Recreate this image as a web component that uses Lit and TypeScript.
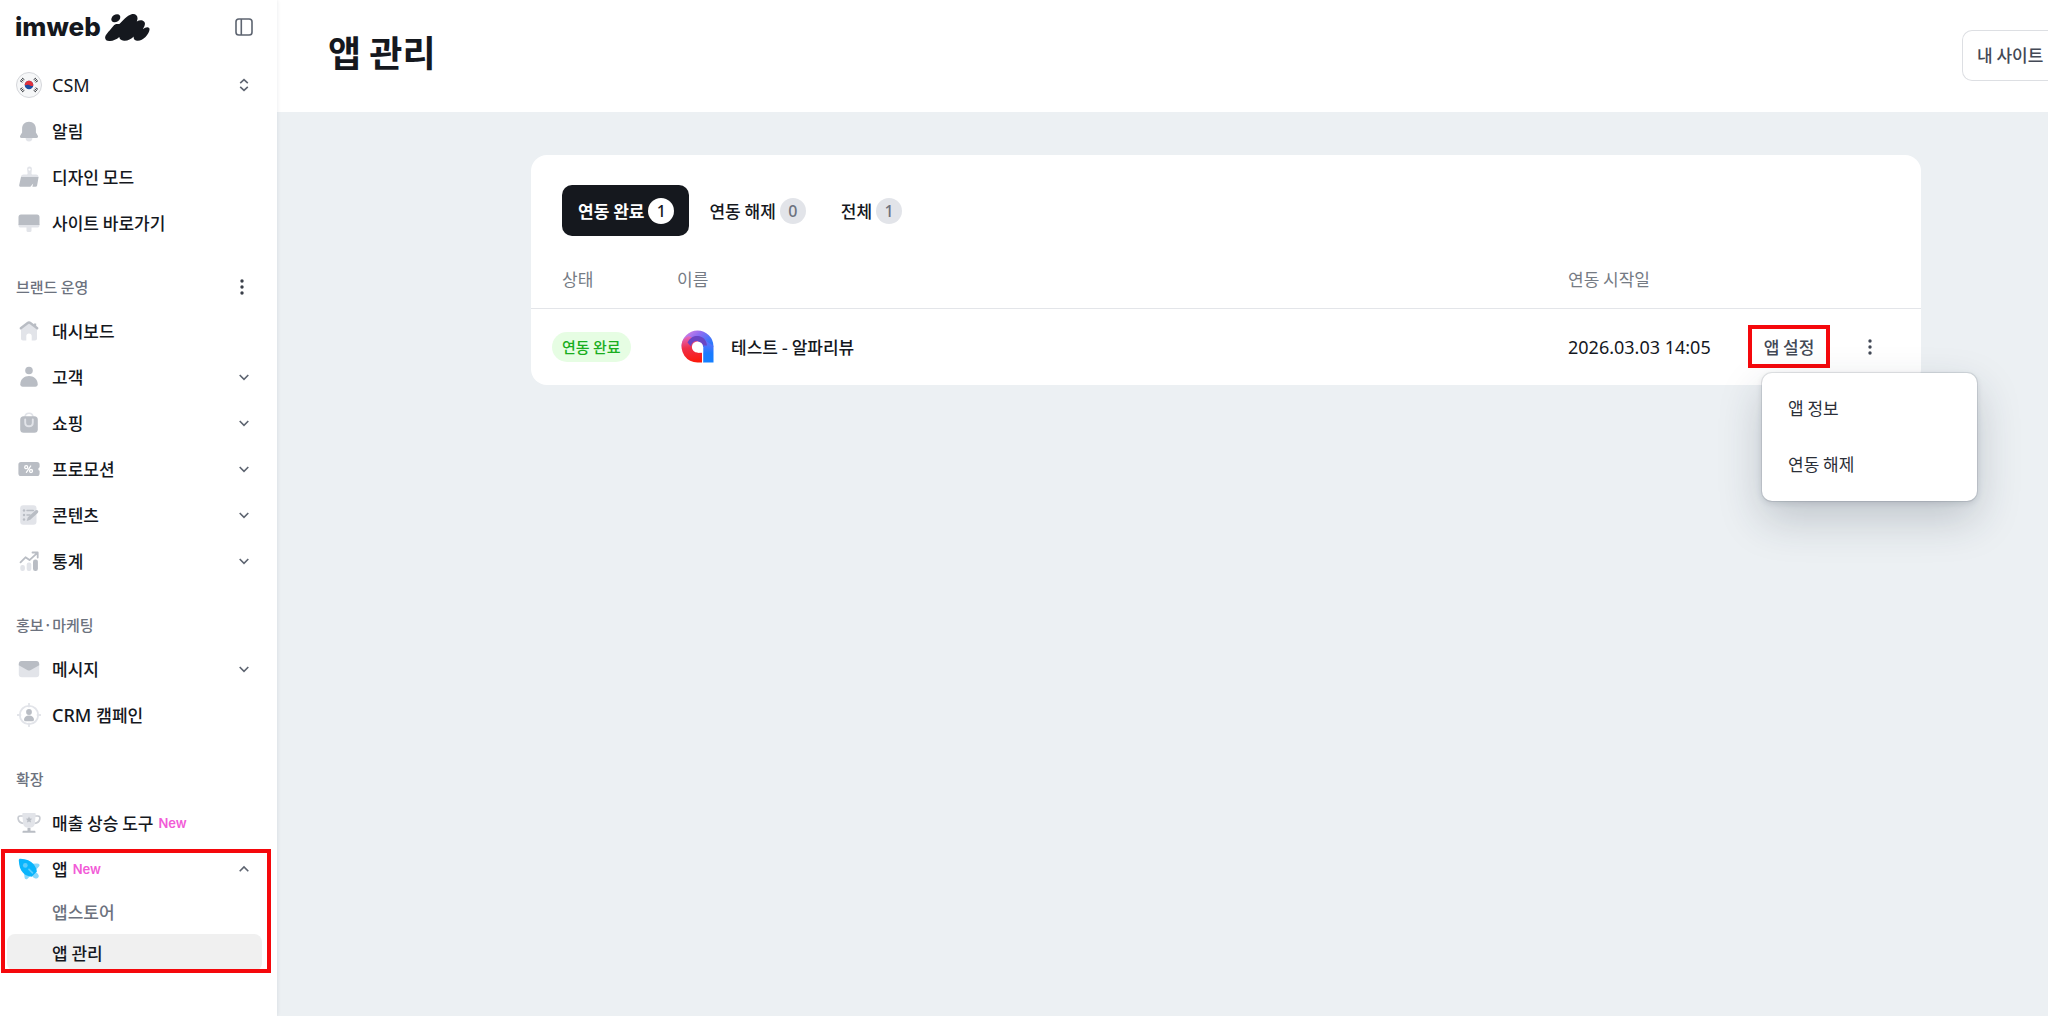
import { LitElement, html, svg, css, nothing } from "lit";
import { customElement, property, state } from "lit/decorators.js";
import { classMap } from "lit/directives/class-map.js";

const DARK = "#b9bdc4";
const LIGHT = "#e2e4e9";

const ICONS: Record<string, unknown> = {
  bell: svg`<circle cx="12" cy="19" r="3.4" fill=${LIGHT}/>
    <path fill=${DARK} d="M12 2.8c-4.3 0-6.9 3-6.9 7v3.700L3.300 16.600c-.8 1.200-.1 2.400 1.200 2.400h15c1.300 0 2-1.200 1.200-2.400l-1.800-3.100V9.800c0-4-2.600-7-6.900-7z"/>`,
  brush: svg`<path fill=${LIGHT} fill-rule="evenodd" d="M12.500 1.500c-1.700 0-2.600 1.200-2.400 2.800l.5 3.700c.1 1-.4 1.500-1.300 1.500H6.500C5 9.500 4 10.500 3.900 12h17.600c0-1.500-.9-2.500-2.400-2.500h-3.300c-.9 0-1.400-.5-1.300-1.500l.4-3.700c.2-1.600-.7-2.800-2.400-2.800zm0 2a1.100 1.100 0 1 1 0 2.200 1.100 1.100 0 0 1 0-2.200z"/>
    <path fill=${DARK} d="M4 12h17.600l-1.500 8.600c-.1.800-.7 1.200-1.500 1.200h-3.200l.8-3.300-2.800 3.300H3.800c-1.200 0-1.800-.8-1.600-1.900z"/>`,
  monitor: svg`<path fill=${LIGHT} d="M1.500 13h21v1.200c0 1.500-.9 2.300-2.300 2.300h-5.700v3.300c0 .7-.5 1.200-1.200 1.200h-2.600c-.7 0-1.200-.5-1.200-1.200v-3.300H3.800c-1.400 0-2.300-.8-2.300-2.300z"/>
    <path fill=${DARK} d="M4 3.500h16c1.600 0 2.500.9 2.500 2.500v8h-21V6c0-1.600.9-2.500 2.500-2.500z"/>`,
  home: svg`<path fill=${LIGHT} d="M4 10l8-6 8 6v9.500c0 1.300-.8 2-2 2h-3.300V17c0-1.600-1-2.500-2.700-2.500S9.300 15.400 9.300 17v4.500H6c-1.200 0-2-.7-2-2z"/>
    <path fill="none" stroke=${DARK} stroke-width="2.400" stroke-linecap="round" stroke-linejoin="round" d="M3.800 9.200L10.700 4q1.300-1 2.600 0l6.900 5.200"/>
    <path fill=${DARK} d="M17 4.500h2.200v4L17 7z"/>`,
  person: svg`<circle cx="12" cy="5.500" r="3.800" fill=${DARK}/>
    <path fill=${DARK} d="M12 11c-4.800 0-8.700 3.300-8.700 8.200 0 1.600.9 2.500 2.400 2.500h12.600c1.500 0 2.400-.9 2.400-2.500C20.700 14.300 16.800 11 12 11z"/>`,
  bag: svg`<path fill="none" stroke=${LIGHT} stroke-width="1.600" d="M8 6.500c0-2.900 1.500-4.300 4-4.300s4 1.400 4 4.300"/>
    <rect x="3.200" y="5.300" width="17.600" height="16.500" rx="3.500" fill=${DARK}/>
    <path fill="none" stroke=${LIGHT} stroke-width="1.900" stroke-linecap="round" d="M8.200 8.500v3c0 2.400 1.500 3.800 3.800 3.800s3.800-1.400 3.800-3.800v-3"/>`,
  coupon: svg`<path fill=${DARK} d="M4 5h16c1.700 0 2.600.9 2.600 2.600v2.600c-1.700.4-1.700 3.200 0 3.600v2.600c0 1.700-.9 2.600-2.600 2.600H4c-1.700 0-2.600-.9-2.600-2.600V7.600C1.400 5.900 2.300 5 4 5z"/>
    <g fill="none" stroke="#fff" stroke-width="1.300" stroke-linecap="round"><circle cx="9.200" cy="10.200" r="1.500"/><circle cx="14" cy="14" r="1.500"/><path d="M13.700 9l-4.300 6.300"/></g>`,
  note: svg`<rect x="3.200" y="2.300" width="16.300" height="19.400" rx="3" fill=${LIGHT}/>
    <g fill=${DARK}><circle cx="7" cy="7.500" r="1.200"/><circle cx="7" cy="12" r="1.200"/><circle cx="7" cy="16.500" r="1.200"/></g>
    <path stroke=${DARK} stroke-width="1.500" stroke-linecap="round" d="M10 7.500h6.300M10 12h3"/>
    <path fill=${DARK} d="M18.300 7.500c.8-.8 2-.8 2.600 0 .6.700.5 1.700-.2 2.400l-7.400 6.900-3.600 1.100 1-3.500z"/>`,
  chart: svg`<rect x="3.300" y="16" width="4.600" height="6" rx="2" fill=${LIGHT}/><rect x="9.700" y="13.500" width="4.600" height="8.500" rx="2" fill=${LIGHT}/>
    <rect x="16" y="10.500" width="4.900" height="11.500" rx="2.200" fill=${DARK}/>
    <path fill="none" stroke=${DARK} stroke-width="1.800" stroke-linecap="round" stroke-linejoin="round" d="M3.500 13.300l5-5 4 2.800 7.600-7M15.500 3.500h5.200v5"/>`,
  mail: svg`<rect x="1.800" y="4" width="20.400" height="16.300" rx="3" fill=${LIGHT}/>
    <path fill=${DARK} d="M4.800 4h14.400c1.700 0 3 1.300 3 3v1.300l-8.400 4.600c-1.200.7-2.400.7-3.600 0L1.800 8.300V7c0-1.700 1.300-3 3-3z"/>`,
  target: svg`<circle cx="12" cy="12" r="9.200" fill="#fff" stroke=${LIGHT} stroke-width="1.800"/>
    <path stroke=${LIGHT} stroke-width="1.800" stroke-linecap="round" d="M12 .7v2.800M12 20.500v2.800M.7 12h2.800M20.500 12h2.800"/>
    <circle cx="12" cy="9" r="2.900" fill=${DARK}/><path fill=${DARK} d="M12 12.600c-3 0-5 1.900-5 4.200 0 .9.500 1.400 1.400 1.400h7.200c.9 0 1.400-.5 1.400-1.400 0-2.300-2-4.200-5-4.200z"/>`,
  trophy: svg`<path fill="none" stroke="#c9ccd2" stroke-width="1.700" d="M6 5H3.200C1.300 5 .9 6.300 1.200 8c.4 2.400 2.200 4 5.300 4.500M18 5h2.800c1.900 0 2.300 1.300 2 3-.4 2.400-2.200 4-5.300 4.500"/>
    <path fill=${LIGHT} d="M6.500 2h11c.8 0 1.300.5 1.200 1.300l-.8 9c-.2 2.800-2.400 4.700-5.900 4.700s-5.700-1.900-5.900-4.700l-.8-9C5.200 2.500 5.700 2 6.500 2z"/>
    <path fill=${DARK} d="M12 5.500l.95 2.100 2.250.25-1.700 1.500.5 2.250L12 10.450 10 11.600l.5-2.250-1.700-1.500 2.250-.25zM10.500 17h3v2.800h3.800c.7 0 1.200.5 1.200 1.200v.8h-13V21c0-.7.500-1.200 1.200-1.200h3.800z"/>`,
  rocket: svg`<path fill="#86d7fb" d="M14.500 6.800l5.500-.3c2.500 0 3.300 1.500 2 3l-3.800 4.300zM7 14.500l.5 5.500c.2 2.400 1.800 2.900 3.300 1.400l3.700-3.900z"/>
    <path fill="#86d7fb" d="M14.500 17.500l3-3c2.200.8 4.500 3.200 4.300 4.700-.3 1.800-2 2.600-3.500 2.300-1.500-.3-3.200-1.700-3.800-4z"/>
    <path fill="#0ab5fc" d="M1.800 3.400c-.1-1 .6-1.700 1.600-1.600 6.100.3 10.400 2.100 13.200 5.400 1.800 2.100 2.900 4.500 3.300 7.300l-5.200 5.300c-3.500-.3-6.500-1.500-8.700-4C3.400 12.900 2 8.800 1.800 3.400z"/>
    <circle cx="8.300" cy="8.400" r="2.400" fill="#5ccdfc"/><path stroke="#5ccdfc" stroke-width="1.700" stroke-linecap="round" d="M12 12.300l3.500 3.500"/>`,
};

const flag = svg`<circle cx="13" cy="13" r="12.500" fill="#f6f7f8" stroke="#d4d6da"/>
  <circle cx="13" cy="13" r="4.300" fill="#1d4da1"/>
  <path fill="#e0323c" d="M8.700 13a4.300 4.300 0 0 1 8.600 0c0 .9-.8 1.300-2.100 1-1.200-.3-1.800-1.100-3-1.300-1.600-.3-2.300 1.100-3.500.3z"/>
  <g fill="none" stroke="#33363b" stroke-width="1">
    <path d="M4 8.600l2.400 1.700M5 7.300l2.400 1.700M6 6l2.400 1.700M22 8.600l-2.400 1.700M21 7.300l-2.400 1.700M20 6l-2.400 1.700M4 17.400l2.400-1.700M5 18.700l2.400-1.700M6 20l2.400-1.700M22 17.400l-2.400-1.700M21 18.700l-2.400-1.700M20 20l-2.400-1.700"/></g>`;

const kebab = html`<svg class="kebab" viewBox="0 0 20 20" width="20" height="20" aria-hidden="true" fill="currentColor">
  <circle cx="10" cy="4" r="1.700"/><circle cx="10" cy="10" r="1.700"/><circle cx="10" cy="16" r="1.700"/></svg>`;

interface Item {
  label: string;
  latin?: string;
  icon: string;
  fold?: "open" | "closed";
  isNew?: boolean;
  children?: { label: string; active?: boolean }[];
}
interface Group {
  title?: string;
  menu?: boolean;
  items: Item[];
}

const GROUPS: Group[] = [
  {
    items: [
      { label: "알림", icon: "bell" },
      { label: "디자인 모드", icon: "brush" },
      { label: "사이트 바로가기", icon: "monitor" },
    ],
  },
  {
    title: "브랜드 운영",
    menu: true,
    items: [
      { label: "대시보드", icon: "home" },
      { label: "고객", icon: "person", fold: "closed" },
      { label: "쇼핑", icon: "bag", fold: "closed" },
      { label: "프로모션", icon: "coupon", fold: "closed" },
      { label: "콘텐츠", icon: "note", fold: "closed" },
      { label: "통계", icon: "chart", fold: "closed" },
    ],
  },
  {
    title: "홍보·마케팅",
    items: [
      { label: "메시지", icon: "mail", fold: "closed" },
      { latin: "CRM", label: "캠페인", icon: "target" },
    ],
  },
  {
    title: "확장",
    items: [
      { label: "매출 상승 도구", icon: "trophy", isNew: true },
      {
        label: "앱",
        icon: "rocket",
        isNew: true,
        fold: "open",
        children: [{ label: "앱스토어" }, { label: "앱 관리", active: true }],
      },
    ],
  },
];

const shared = css`
  * { box-sizing: border-box; }
  button, a {
    font: inherit;
    color: inherit;
    background: none;
    border: 0;
    padding: 0;
    margin: 0;
    text-decoration: none;
    text-align: left;
    cursor: pointer;
    white-space: nowrap;
  }
  svg { display: block; flex: none; }
  .latin { font-family: "Noto Sans", sans-serif; font-size: 18px; }
`;

@customElement("side-bar")
export class SideBar extends LitElement {
  static styles = [
    shared,
    css`
      :host {
        display: block;
        flex: none;
        width: 277px;
        background: #fff;
        color: #15181e;
        box-shadow: 0 0 4px rgba(20, 30, 50, 0.1);
        z-index: 1;
      }
      .top {
        display: flex;
        align-items: center;
        justify-content: space-between;
        height: 54px;
        padding: 0 22px 0 15px;
      }
      .brand { display: flex; align-items: center; gap: 3px; }
      .brand-name { font: 800 26px/32px Inter, sans-serif; }
      .toggle { color: #5d6470; }
      .row {
        display: flex;
        align-items: center;
        gap: 10px;
        width: 100%;
        height: 46px;
        padding: 0 22px 0 16px;
        font-weight: 500;
      }
      .site { margin-top: 8px; font-weight: 400; }
      .icon { width: 26px; display: flex; justify-content: center; flex: none; }
      .label { display: flex; align-items: center; gap: 5px; flex: 1; }
      .new { font: 600 13px/20px Inter, sans-serif; color: #f25bd7; }
      .arrow { color: #5d6470; margin-right: 1px; }
      .head {
        display: flex;
        align-items: center;
        justify-content: space-between;
        height: 42px;
        margin-top: 20px;
        padding: 0 25px 0 16px;
        font-size: 15px;
        font-weight: 500;
        color: #6c727e;
      }
      .head .kebab { color: #3a3f49; }
      .list { list-style: none; margin: 0; padding: 0; }
      .sub { display: flex; flex-direction: column; gap: 4px; padding: 1px 15px 0 7px; }
      .sub-link {
        display: flex;
        align-items: center;
        height: 37px;
        padding-left: 45px;
        border-radius: 8px;
        font-weight: 500;
        color: #6c727e;
      }
      .sub-link.active { background: #f0f0f0; color: #15181e; }
      .fold { position: relative; }
      .mark {
        position: absolute;
        top: 3px;
        bottom: -2px;
        left: 1px;
        right: 6px;
        border: 4px solid #f5080c;
        pointer-events: none;
      }
    `,
  ];

  private arrow(open: boolean) {
    return html`<svg class="arrow" width="20" height="20" viewBox="0 0 20 20" fill="none" stroke="currentColor" stroke-width="1.600" aria-hidden="true">
      <path d=${open ? "M5.700 12.200L10 7.900l4.300 4.300" : "M5.700 8l4.300 4.300L14.300 8"}></path></svg>`;
  }

  private item(i: Item) {
    const body = html`<span class="icon"><svg width="24" height="24" viewBox="0 0 24 24" aria-hidden="true">${ICONS[i.icon]}</svg></span>
      <span class="label">${i.latin ? html`<span class="latin">${i.latin}</span>` : nothing}<span>${i.label}</span>${i.isNew
        ? html`<span class="new">New</span>`
        : nothing}</span>
      ${i.fold ? this.arrow(i.fold === "open") : nothing}`;
    const row = i.fold
      ? html`<button class="row" type="button" aria-expanded=${i.fold === "open"}>${body}</button>`
      : html`<a class="row" href="#">${body}</a>`;
    return html`<li class=${classMap({ fold: !!i.children })}>
      ${row}
      ${i.children
        ? html`<div class="sub">
              ${i.children.map(
                (c) => html`<a class=${classMap({ "sub-link": true, active: !!c.active })} href="#">${c.label}</a>`
              )}
            </div>
            <div class="mark"></div>`
        : nothing}
    </li>`;
  }

  render() {
    return html`
      <div class="top">
        <a class="brand" href="#" aria-label="imweb">
          <span class="brand-name">imweb</span>
          <svg width="46" height="30" viewBox="0 0 46 30" aria-hidden="true" fill="#15181e">
            <ellipse cx="11.800" cy="6.300" rx="4.900" ry="3.600" transform="rotate(-35 11.800 6.300)"/>
            <path d="M6 29C2.500 29.300.5 27.300 1.300 24.500 2 22 6 18.500 10 13.300 11 12 13 11.700 15.300 12 19 8.500 23 3.500 27.500 2.200 32 1 35 4.500 32.800 9.500 35 8.200 38 7.700 40 9.500 42 11.500 40.500 14.500 38.800 17.200 41 15.500 44 14.500 45.300 16.200 46.300 18 44.300 22 41.500 25 38.500 28 35 29.500 32 28.500 29.800 27.700 29.300 26 29.800 24.500 27 27.300 23.500 29 20 28.700 17 28.400 15.500 27 15.300 25 12.500 27.500 9.300 28.800 6 29z"/>
          </svg>
        </a>
        <button class="toggle" type="button" aria-label="메뉴 접기">
          <svg width="22" height="22" viewBox="0 0 22 22" fill="none" stroke="currentColor" stroke-width="1.600"><rect x="3" y="3" width="16" height="16" rx="2.800"/><path d="M8.300 3v16"/></svg>
        </button>
      </div>
      <button class="row site" type="button">
        <span class="icon"><svg width="26" height="26" viewBox="0 0 26 26" aria-hidden="true">${flag}</svg></span>
        <span class="label"><span class="latin">CSM</span></span>
        <svg class="arrow" width="20" height="20" viewBox="0 0 20 20" fill="none" stroke="currentColor" stroke-width="1.600" aria-hidden="true"><path d="M6.200 8.200L10 4.700l3.800 3.500M6.200 11.800l3.800 3.500 3.800-3.500"/></svg>
      </button>
      <nav>
        ${GROUPS.map(
          (g) => html`
            ${g.title
              ? html`<div class="head"><span>${g.title}</span>${g.menu
                    ? html`<button type="button" aria-label="더보기">${kebab}</button>`
                    : nothing}</div>`
              : nothing}
            <ul class="list">${g.items.map((i) => this.item(i))}</ul>
          `
        )}
      </nav>
    `;
  }
}

@customElement("app-list")
export class AppList extends LitElement {
  @state() private tab = 0;

  static styles = [
    shared,
    css`
      :host {
        display: block;
        background: #fff;
        border-radius: 16px;
        color: #15181e;
      }
      .tabs { display: flex; gap: 4px; padding: 30px 31px 0; }
      .tab {
        display: flex;
        align-items: center;
        gap: 4px;
        height: 51px;
        padding: 0 15px 0 16px;
        border-radius: 10px;
        font-weight: 500;
      }
      .tab.on { background: #15181e; color: #fff; font-weight: 700; }
      .count {
        width: 26px;
        height: 26px;
        border-radius: 13px;
        background: #e2e4e9;
        color: #6c727e;
        font-family: "Noto Sans", sans-serif;
        font-weight: 500;
        font-size: 16px;
        line-height: 26px;
        text-align: center;
      }
      .tab.on .count { background: #fff; color: #15181e; }
      .table { width: 100%; table-layout: fixed; border-collapse: collapse; }
      .c-state { width: 146px; }
      .c-date { width: 180px; }
      .c-act { width: 173px; }
      th {
        height: 72px;
        padding: 14px 0 0;
        text-align: left;
        vertical-align: middle;
        font-weight: 400;
        color: #757b84;
        border-bottom: 1px solid #e3e5e9;
      }
      td { height: 77px; padding: 0; vertical-align: middle; }
      th:first-child { padding-left: 31px; }
      td:first-child { padding-left: 21px; }
      .pill {
        display: inline-block;
        height: 30px;
        padding: 0 10px;
        border-radius: 15px;
        background: #e6fde3;
        color: #1aae1f;
        font-size: 15px;
        font-weight: 500;
        line-height: 30px;
      }
      .app { display: flex; align-items: center; gap: 17px; padding-left: 4px; font-weight: 500; }
      .actions { position: relative; display: flex; align-items: center; gap: 24px; height: 43px; }
      .setting {
        width: 82px;
        height: 43px;
        border: 4px solid #f5080c;
        text-align: center;
        font-weight: 500;
        color: #434956;
      }
      .more { width: 32px; height: 32px; display: flex; align-items: center; justify-content: center; color: #434956; }
      .menu {
        position: absolute;
        top: 48px;
        left: 14px;
        width: 215px;
        padding: 7px 0 9px;
        border-radius: 10px;
        background: #fff;
        box-shadow: 0 0 0 1px rgba(30, 40, 60, 0.1), 0 2px 6px rgba(30, 40, 60, 0.14), 0 18px 44px rgba(30, 45, 65, 0.22);
      }
      .menu-item { display: block; width: 100%; height: 56px; padding-left: 26px; color: #2b2f38; }
    `,
  ];

  render() {
    const tabs = [
      ["연동 완료", 1],
      ["연동 해제", 0],
      ["전체", 1],
    ] as const;
    return html`
      <div class="tabs" role="tablist">
        ${tabs.map(
          ([t, n], i) => html`<button class=${classMap({ tab: true, on: this.tab === i })} type="button" role="tab"
            aria-selected=${this.tab === i} @click=${() => (this.tab = i)}><span>${t}</span><span class="count">${n}</span></button>`
        )}
      </div>
      <table class="table">
        <colgroup><col class="c-state" /><col /><col class="c-date" /><col class="c-act" /></colgroup>
        <thead>
          <tr><th scope="col">상태</th><th scope="col">이름</th><th scope="col">연동 시작일</th><th></th></tr>
        </thead>
        <tbody>
          <tr>
            <td><span class="pill">연동 완료</span></td>
            <td>
              <div class="app">
                <svg width="33" height="33" viewBox="0 0 33 33" aria-hidden="true">
                  <defs>
                    <linearGradient id="arc" x1="0" y1="0" x2="1" y2="0.600"><stop offset="0" stop-color="#f08bdc"/><stop offset=".5" stop-color="#8d6cf2"/><stop offset="1" stop-color="#2f78fb"/></linearGradient>
                    <linearGradient id="red" x1="0.300" y1="0" x2="0.400" y2="1"><stop offset="0" stop-color="#e46ac4"/><stop offset=".45" stop-color="#ee2f4a"/><stop offset="1" stop-color="#fb1a0c"/></linearGradient>
                    <linearGradient id="blue" x1="0" y1="0" x2="0" y2="1"><stop offset="0" stop-color="#7a6cf8"/><stop offset=".6" stop-color="#1a7bff"/><stop offset="1" stop-color="#1580ff"/></linearGradient>
                  </defs>
                  <path fill="url(#arc)" d="M.5 16.500A16 16 0 0 1 32.500 16.500L22 17 5 14z"/>
                  <path fill="url(#blue)" d="M22 9l10.500 7v16.500H22z"/>
                  <path fill="url(#red)" d="M1.500 11C3 8.500 5 7 8 6l9 5v11.500h4V32.500h-4.500A16 16 0 0 1 1.500 11z"/>
                  <path fill="#6a45c4" d="M6.500 12.500C9 7.500 13 5.700 17 6c5 .4 8.500 4 9 9.500h-4.500L16.500 11c-4 0-6 2-6.500 5.500z"/>
                  <circle cx="16.500" cy="17" r="5.600" fill="#fff"/><path fill="#fff" d="M16.500 17h5.600v5.600h-5.600z"/><path fill="#fff" d="M21 17h1.200v15.500H21z"/>
                </svg>
                <span>테스트 - 알파리뷰</span>
              </div>
            </td>
            <td><span class="latin">2026.03.03 14:05</span></td>
            <td>
              <div class="actions">
                <button class="setting" type="button">앱 설정</button>
                <button class="more" type="button" aria-label="더보기" aria-expanded="true">${kebab}</button>
                <div class="menu" role="menu">
                  <button class="menu-item" type="button" role="menuitem">앱 정보</button>
                  <button class="menu-item" type="button" role="menuitem">연동 해제</button>
                </div>
              </div>
            </td>
          </tr>
        </tbody>
      </table>
    `;
  }
}

@customElement("app-root")
export class AppRoot extends LitElement {
  @property() heading = "앱 관리";

  static styles = [
    shared,
    css`
      :host {
        display: flex;
        min-height: 100vh;
        background: #ecf0f3;
        color: #15181e;
        font-family: "Noto Sans CJK KR", sans-serif;
        font-size: 17px;
        line-height: 26px;
      }
      .page { flex: 1; min-width: 0; overflow: hidden; }
      .header {
        display: flex;
        align-items: center;
        justify-content: space-between;
        height: 112px;
        padding: 0 0 2px 51px;
        background: #fff;
      }
      .title { margin: 0 0 8px; font-size: 36px; line-height: 48px; font-weight: 700; }
      .preview {
        flex: none;
        width: 86px;
        height: 51px;
        padding-left: 14px;
        border: 1px solid #dddfe3;
        border-right: 0;
        border-radius: 10px 0 0 10px;
        font-weight: 500;
        color: #434956;
        overflow: hidden;
      }
      .content { padding: 43px 127px 43px 254px; }
    `,
  ];

  render() {
    return html`
      <side-bar></side-bar>
      <main class="page">
        <header class="header">
          <h1 class="title">${this.heading}</h1>
          <button class="preview" type="button">내 사이트</button>
        </header>
        <div class="content"><app-list></app-list></div>
      </main>
    `;
  }
}
